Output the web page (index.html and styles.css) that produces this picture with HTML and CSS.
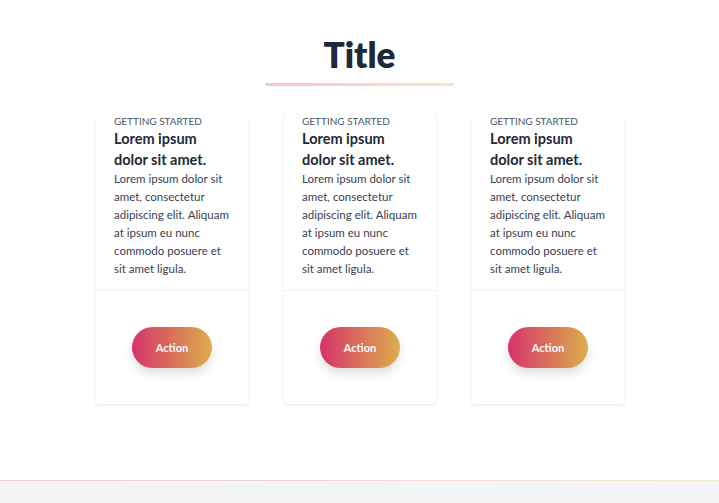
FILE: index.html
```html
<!DOCTYPE html>
<html>
<head>
<meta charset="utf-8">
<link rel="stylesheet" href="styles.css">
</head>
<body>
<main class="page">
  <header class="hero">
    <h1 class="title">Title</h1>
    <div class="underline"></div>
  </header>
  <section class="cards">
    <article class="card">
      <div class="card-body">
        <div class="eyebrow">GETTING STARTED</div>
        <h2 class="card-title">Lorem ipsum dolor sit amet.</h2>
        <p class="card-text">Lorem ipsum dolor sit amet, consectetur adipiscing elit. Aliquam at ipsum eu nunc commodo posuere et sit amet ligula.</p>
      </div>
      <div class="card-footer"><button class="btn">Action</button></div>
    </article>
    <article class="card">
      <div class="card-body">
        <div class="eyebrow">GETTING STARTED</div>
        <h2 class="card-title">Lorem ipsum dolor sit amet.</h2>
        <p class="card-text">Lorem ipsum dolor sit amet, consectetur adipiscing elit. Aliquam at ipsum eu nunc commodo posuere et sit amet ligula.</p>
      </div>
      <div class="card-footer"><button class="btn">Action</button></div>
    </article>
    <article class="card">
      <div class="card-body">
        <div class="eyebrow">GETTING STARTED</div>
        <h2 class="card-title">Lorem ipsum dolor sit amet.</h2>
        <p class="card-text">Lorem ipsum dolor sit amet, consectetur adipiscing elit. Aliquam at ipsum eu nunc commodo posuere et sit amet ligula.</p>
      </div>
      <div class="card-footer"><button class="btn">Action</button></div>
    </article>
  </section>
</main>
<footer class="footer"></footer>
</body>
</html>
```
FILE: styles.css
```css
* { box-sizing: border-box; }
html, body { margin: 0; padding: 0; }
body {
  background: #fff;
  font-family: Lato, "Noto Sans", sans-serif;
  color: #1f2937;
}
.page {
  height: 480px;
  padding-top: 33px;
}
.hero {
  display: flex;
  flex-direction: column;
  align-items: center;
}
.title {
  margin: 0;
  font-size: 35px;
  line-height: 42px;
  font-weight: 800;
  color: #1e293b;
}
.underline {
  margin-top: 8px;
  width: 189px;
  height: 3px;
  border-radius: 2px;
  background: linear-gradient(90deg, #f8c3d3, #f6e6c6);
}
.cards {
  margin-top: 29px;
  display: flex;
  justify-content: center;
  gap: 36px;
  padding-left: 1px;
}
.card {
  width: 152px;
  background: #fff;
  border-radius: 3px;
  box-shadow: 0 1px 3px rgba(0,0,0,0.10), 0 0 1px rgba(0,0,0,0.06);
}
.card-body {
  padding: 0 18px 12px;
  border-bottom: 1px solid #eef0f2;
}
.eyebrow {
  font-size: 10px;
  line-height: 13px;
  color: #4b5563;
}
.card-title {
  margin: 0;
  font-size: 14.5px;
  line-height: 21px;
  font-weight: 700;
  color: #1f2937;
}
.card-text {
  margin: 0;
  font-size: 11.5px;
  line-height: 18px;
  color: #374151;
}
.card-footer {
  height: 113px;
  display: flex;
  align-items: center;
  justify-content: center;
}
.btn {
  width: 80px;
  height: 41px;
  border: 0;
  border-radius: 21px;
  background: linear-gradient(90deg, #d6336a, #dcae4c);
  color: #fff;
  font-family: Lato, "Noto Sans", sans-serif;
  font-weight: 700;
  font-size: 11px;
  box-shadow: 0 6px 10px rgba(0,0,0,0.12);
  cursor: pointer;
}
.footer {
  height: 23px;
  background: #f3f4f6;
  border-top: 1px solid transparent;
  border-image: linear-gradient(90deg, #f5c6d4, #f4ead4) 1;
}
```
